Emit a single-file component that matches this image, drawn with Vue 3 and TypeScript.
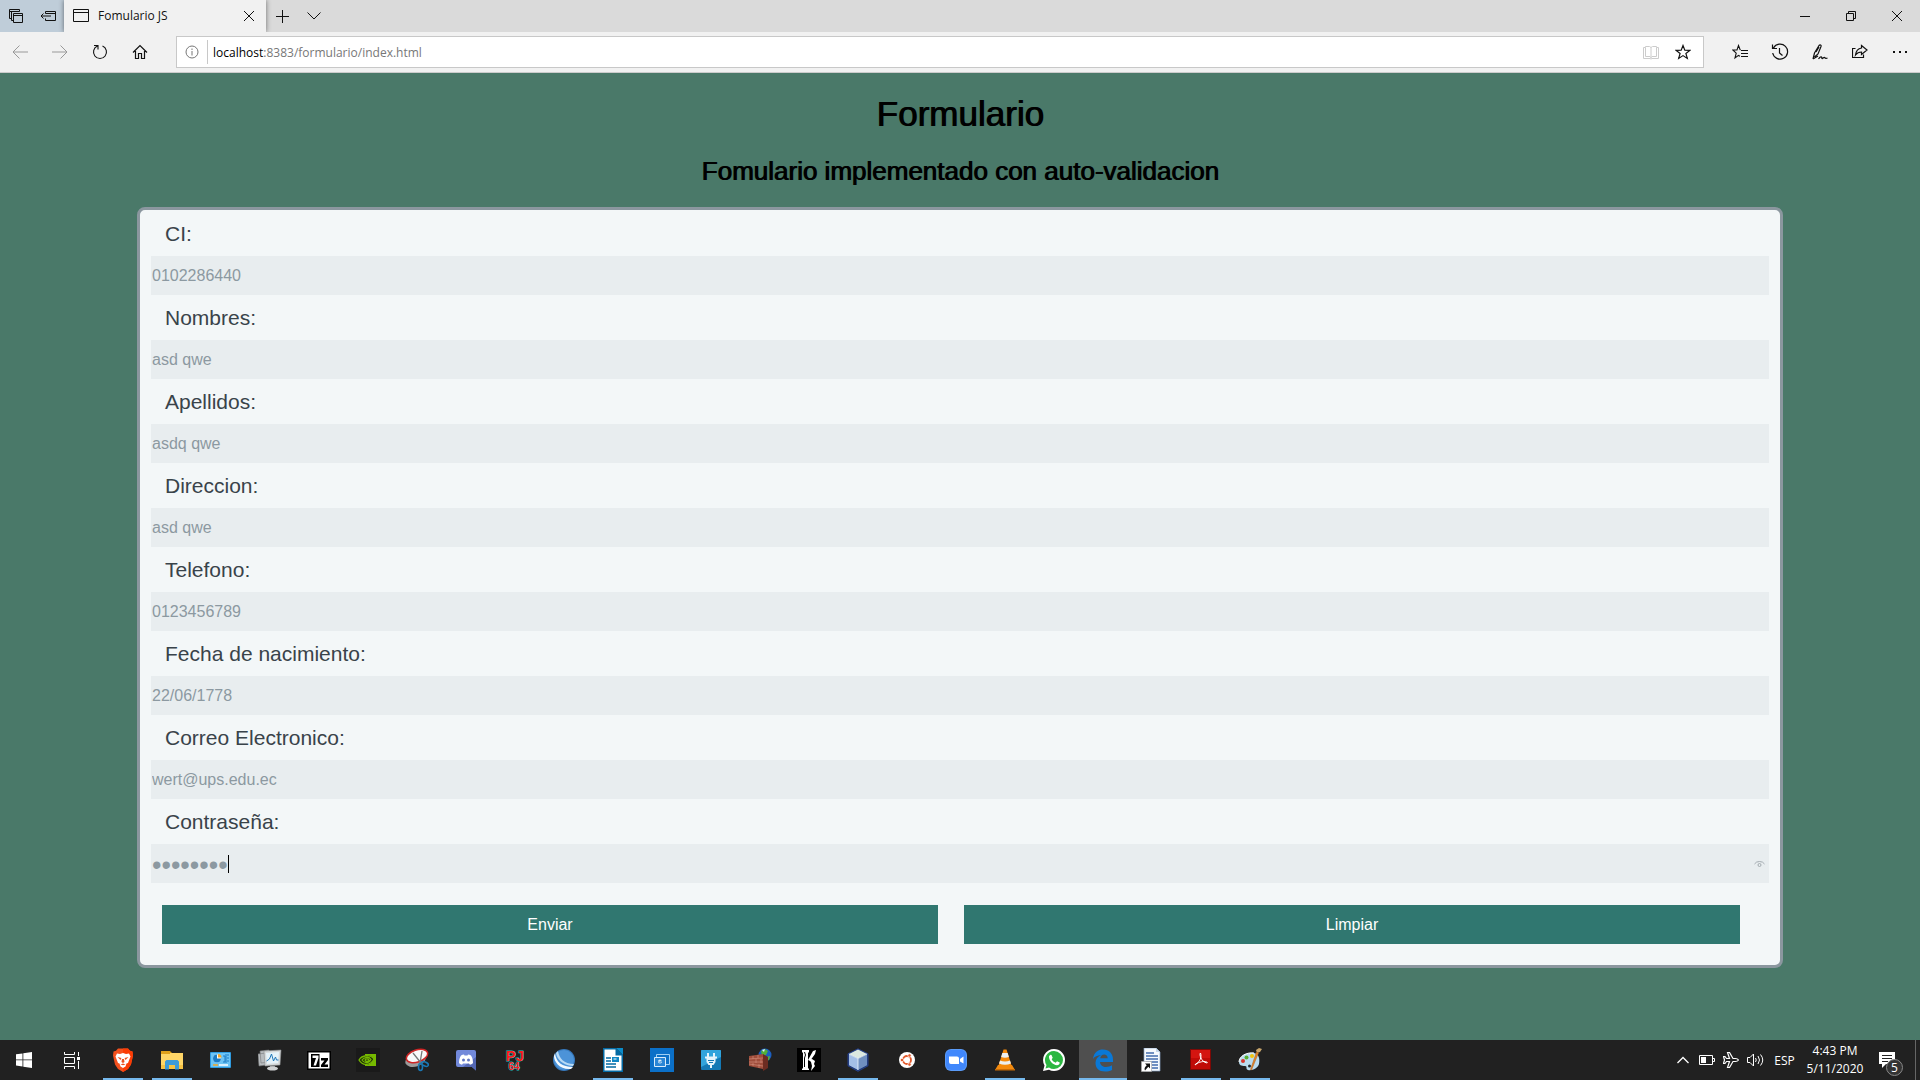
<script setup lang="ts">
import { ref } from 'vue'

interface Field {
  id: string
  label: string
  type: string
  value: string
}

interface TaskApp {
  name: string
  running?: boolean
  active?: boolean
  art: string
}

const initial: Field[] = [
  { id: 'ci', label: 'CI:', type: 'text', value: '0102286440' },
  { id: 'nombres', label: 'Nombres:', type: 'text', value: 'asd qwe' },
  { id: 'apellidos', label: 'Apellidos:', type: 'text', value: 'asdq qwe' },
  { id: 'direccion', label: 'Direccion:', type: 'text', value: 'asd qwe' },
  { id: 'telefono', label: 'Telefono:', type: 'text', value: '0123456789' },
  { id: 'fecha', label: 'Fecha de nacimiento:', type: 'text', value: '22/06/1778' },
  { id: 'correo', label: 'Correo Electronico:', type: 'text', value: 'wert@ups.edu.ec' },
  { id: 'contrasena', label: 'Contraseña:', type: 'password', value: 'asdfqwer' },
]

const fields = ref<Field[]>(initial)

function limpiar(): void {
  fields.value.forEach((f) => (f.value = ''))
}

const apps: TaskApp[] = [
  {
    name: 'Brave',
    running: true,
    art: '<path d="M7 .5h10l2 2.3 2.500 .7.5 4-2 9-3 4.500-5 3-5-3L4 16.500 2 7.500l.5-4L5 2.800z" fill="#f4511e"/><path d="M12 .5h5l2 2.300 2.500.7.5 4-2 9-3 4.500-5 3z" fill="#fb3c05"/><path d="M6 5.500l3 .4 3-.9 3 .9 3-.4 1.500 3-1 2.500-1.500 4-1.500.5-1 3-2.500 1.500-2.500-1.500-1-3L7 15l-1.500-4-1-2.500z" fill="#fff"/><path d="M6.500 9l4 1-1 2zM17.500 9l-4 1 1 2zM11 11h2l.5 3-1.500 1-1.500-1zM9.500 16.500l2.500-1 2.500 1-2.500.8z" fill="#e9501f"/>',
  },
  {
    name: 'Explorador de archivos',
    running: true,
    art: '<path d="M1 3h9l2 2h-11z" fill="#d99a12"/><path d="M1 5h22v16H1z" fill="#ffd667"/><path d="M1 3h9v3H1z" fill="#e0a11b"/><path d="M1 17h22v4H1z" fill="#f6c243"/><path d="M5 21.500v-8l1.500-1.500h11l1.500 1.500v8h-4V17H9v4.500z" fill="#3c9bd9"/>',
  },
  {
    name: 'Panel de control',
    art: '<rect x="1" y="4" width="21" height="16" rx="1" fill="#2f9be0"/><rect x="2" y="5" width="19" height="14" fill="#6cc4f5"/><circle cx="8" cy="10.500" r="4" fill="#fff"/><path d="M8 10.500V6.500a4 4 0 1 0 4 4z" fill="#1c7bc4"/><path d="M9 9.500V6a3.500 3.500 0 0 1 3.500 3.500z" fill="#f5a623"/><path d="M14 8h2v6h-2m4-7h2m-2 3h2m-2 3h2M17 6v9" stroke="#1c7bc4" fill="none"/><path d="M4 17h5" stroke="#f5a623" stroke-width="1.500"/><path d="M10 17h9" stroke="#fff" stroke-width="1.500"/>',
  },
  {
    name: 'Monitor de recursos',
    art: '<path d="M2 3l9-1v12l-8 1zM0 6l8-1v12l-7 1z" fill="#b8bcbf" stroke="#77797b" stroke-width=".6"/><path d="M6 3l17-1-1 15-15 1z" fill="#d7dadb" stroke="#8b8e90" stroke-width=".6"/><path d="M8 5l13-1-1 11-11 1z" fill="#e6f3fa"/><path d="M8.500 13l3-2 2-5 2 7 2-4 1 3h2" stroke="#2077b8" fill="none"/><path d="M12 18h5v2h-5z" fill="#9b9d9e"/><ellipse cx="14.500" cy="20.500" rx="5.500" ry="2" fill="#d0d2d3"/>',
  },
  {
    name: '7-Zip',
    art: '<path d="M0 3h24v19H0z" fill="#000"/><path d="M1.500 4.500h21v16h-21z" fill="#fff"/><path d="M4 6h8.500v13H4z" fill="#000"/><path d="M5.500 7.500h6V10l-2.500 7.500H6.500L9 10H5.500z" fill="#fff"/><path d="M14 10h7v2l-3.500 4.500H21V19h-7v-2l3.500-4.500H14z" fill="#000"/>',
  },
  {
    name: 'NVIDIA',
    art: '<path d="M0 0h24v24H0z" fill="#1a1a1a"/><path d="M9 6h11v12H9z" fill="#76b900"/><path d="M3 12c3-5 11-7 15-1-3 7-11 8-15 1z" fill="#1d2b08"/><path d="M3 12c3-5 11-6 15-1-3 6-11 8-15 1zM6 12c2-3 7-4 9-.5-2 4-7 4-9 .5zM9 12c1-1.500 3-1.500 4 0-1 2-3 2-4 0z" fill="none" stroke="#76b900" stroke-width="1.300"/>',
  },
  {
    name: 'Recortes',
    art: '<ellipse cx="10.500" cy="12" rx="10.500" ry="6.500" fill="#9b9b9b" transform="rotate(-18 10.500 12)"/><ellipse cx="12" cy="8" rx="11" ry="6" fill="#f9f9f9" stroke="#cf2525" stroke-width="1.500" transform="rotate(-18 12 8)"/><path d="M8 5l8 10M17 3l-2 12" stroke="#777" stroke-width="1.300"/><ellipse cx="15.500" cy="19" rx="2" ry="3.500" fill="none" stroke="#1978b5" stroke-width="1.600"/><ellipse cx="20" cy="16" rx="3.500" ry="2" transform="rotate(25 20 16)" fill="none" stroke="#1978b5" stroke-width="1.600"/>',
  },
  {
    name: 'Discord',
    art: '<path d="M4 2h16q2 0 2 2v18.500l-4-3.500H4q-2 0-2-2V4q0-2 2-2z" fill="#7289da"/><path d="M22 9v13.500l-4-3.500H9z" fill="#5468b4"/><path d="M6 16l-1-1c0-3 .5-5 2-7.500 1-.8 2-1 3-1l.5 1h3l.5-1c1 0 2 .2 3 1 1.500 2.500 2 4.500 2 7.500l-1 1-2 .8-1-1.300h-6L8 16.800z" fill="#fff"/><circle cx="9.500" cy="12" r="1.500" fill="#6377c4"/><circle cx="14.500" cy="12" r="1.500" fill="#6377c4"/>',
  },
  {
    name: 'Project64',
    art: '<text x="12" y="13" text-anchor="middle" font-size="15" class="pj">PJ</text><text x="11" y="22" text-anchor="middle" font-size="10" class="pj">64</text>',
  },
  {
    name: 'jDownloader',
    art: '<circle cx="12" cy="12" r="11" fill="#3779bd"/><circle cx="12" cy="12" r="10" fill="#4c93d8"/><path d="M3 5c1 9 7 14 18 14l-2 2C8 22 2 14 2 8z" fill="#f4faff"/><path d="M6 3c1 7 6 13 16 13l-1 2C10 17 5 11 4 5z" fill="#b8daf5"/>',
  },
  {
    name: 'LibreOffice Writer',
    running: true,
    art: '<path d="M2 0h13l7 7v17H2z" fill="#0369a3"/><path d="M3.500 1.500h11v6h6v15h-17z" fill="#fff"/><path d="M15 0h7v7z" fill="#0b8bc9"/><path d="M5 10h5m-5 3h5m-5 3h10M5 19h10" stroke="#0369a3" stroke-width="1.500"/><path d="M11 9h7v5h-7z" fill="#0f86c4"/><path d="M12.500 11h3" stroke="#fff"/>',
  },
  {
    name: 'Captura remota',
    art: '<path d="M0 0h24v24H0z" fill="#0b70c8"/><path d="M6.500 6.500h13v10h-13z" fill="none" stroke="#9fd0f5"/><path d="M4.500 9.500h11v9h-11z" fill="#2a86d6" stroke="#d9ecfb"/><circle cx="10" cy="13.500" r="2" fill="#d9ecfb"/><path d="M9 13.500l1 1 2-2" stroke="#0b70c8" fill="none"/>',
  },
  {
    name: 'Energía',
    art: '<rect x="2" y="2" width="20" height="20" rx="1" fill="#1479b5"/><path d="M2 3q0-1 1-1h18q1 0 1 1v6L2 19z" fill="#31a4dc"/><path d="M9 5v4m6-4v4M6 9.500h12M12 16v4" stroke="#e6f4fb" stroke-width="2"/><path d="M7.500 10h9v4l-2 3h-5l-2-3z" fill="#e6f4fb"/><path d="M9 12.500h6M10 14.500h4" stroke="#1479b5"/>',
  },
  {
    name: 'Firewall',
    art: '<circle cx="17" cy="7" r="6.500" fill="#1c5fc0"/><path d="M13 3l4-2 3 2-2 4-4 1zM18 9l4-1-1 4-3 1z" fill="#52b13b"/><path d="M14 2l3-1-1 3z" fill="#dff0ff"/><path d="M1 8l14-2v15L1 18z" fill="#9f4d3b"/><path d="M15 6l5 3v11l-5 3z" fill="#6c2c21"/><path d="M1 11l14-1m-14 4h14M1 16l14 2M5 8v3m5-4v3m-2 1v4m5-4v4M5 15v3m6-2v4" stroke="#d08b78" stroke-width=".7"/>',
  },
  {
    name: 'KH',
    art: '<path d="M0 0h24v24H0z" fill="#000"/><path d="M5 2h7v2l-1 1v15l1 1v1H5v-1l1-1V5L5 4z" fill="#fff"/><path d="M7.500 4l1 3-1 3v9" stroke="#000" fill="none"/><path d="M11 12l5-9 3-1-1 4-5 7zM12 12l3-1 3 2-1 3 1 2-4 5 1-5-1-4z" fill="#fff"/>',
  },
  {
    name: 'NetBeans',
    running: true,
    art: '<path d="M12 .8l10 5v12l-10 5.500-10-5.500v-12z" fill="#1c3572" stroke="#26418a"/><path d="M12 1.500l9 4.500-9 4.500-9-4.500z" fill="#dbe8e0"/><path d="M3 6l9 4.500v11.500l-9-4.800z" fill="#a4bfe6"/><path d="M21 6l-9 4.500v11.500l9-4.800z" fill="#6f8fc0"/><path d="M3 6l9 4.500 9-4.500M12 10.500V22" fill="none" stroke="#eef5fb" stroke-width=".8"/>',
  },
  {
    name: 'Ubuntu',
    art: '<circle cx="12" cy="12" r="8" fill="#fff"/><circle cx="12" cy="12" r="4" fill="none" stroke="#e2592b" stroke-width="1.800"/><g fill="#e2592b" stroke="#fff" stroke-width=".7"><circle cx="7" cy="12" r="1.700"/><circle cx="14.500" cy="7.500" r="1.700"/><circle cx="14.500" cy="16.500" r="1.700"/></g>',
  },
  {
    name: 'Zoom',
    art: '<rect x="1" y="1" width="22" height="22" rx="6" fill="#5a9bf8"/><rect x="2" y="2" width="20" height="20" rx="5" fill="#4087fc"/><path d="M5 8.500h8q2 0 2 2v5.500H7q-2 0-2-2zM16 11l3.500-2.500v7L16 13.500z" fill="#fff"/>',
  },
  {
    name: 'VLC',
    running: true,
    art: '<path d="M5 17h14l3 5H2z" fill="#f28a0f"/><path d="M10.500 1.500h3l5 16q-6.500 3-13 0z" fill="#f58a0b"/><path d="M9.300 5h5.400l1.200 4q-4 1.500-7.800 0zM7 12.500q5 2 10 0l1 3q-6 2.500-12 0z" fill="#eceff0"/><path d="M2 21h20v1.500H2z" fill="#c86b05"/>',
  },
  {
    name: 'WhatsApp',
    art: '<path d="M12 1a11 11 0 0 1 0 22q-3 0-5-1.200L1 23l1.500-5.500A11 11 0 0 1 12 1z" fill="#fff"/><path d="M12 3a9 9 0 0 1 0 18q-3 0-5-1.500L3.500 20.500l1-3.500A9 9 0 0 1 12 3z" fill="#2cb742"/><path d="M7 8l1.500-1.300 1 .3 1.200 2.700-1 1.500c1 1.800 2 2.700 4 3.500l1.300-1.500 2.700 1.300c.2 1.500-1.200 2.800-2.700 2.800C11 17 6.500 12.500 7 8z" fill="#fff"/>',
  },
  {
    name: 'Edge',
    running: true,
    active: true,
    art: '<path d="M2 11C3 4 7 1.500 12 1.500c6 0 10 4 10 10V14H9c.3 3.500 3 5 6 5 2 0 4.300-.6 6-1.700V22c-2 1-4.500 1.500-7 1.500C8 23.500 4.500 20 4.500 15c0-3.500 2-6.500 5.500-8-3.500.3-6.500 1.500-8 4zM9.200 10.200h7.500c0-2.300-1.500-3.700-3.500-3.700s-3.600 1.500-4 3.700z" fill="#0a78d6"/>',
  },
  {
    name: 'Documento',
    art: '<path d="M4 0h12l4 4v19H4z" fill="#f5f9fd" stroke="#8aa3c4" stroke-width=".7"/><path d="M16 0v4h4" fill="#c4d6ea"/><path d="M6 5h8m-8 3h12M6 11h12M6 14h12m-6 3h6m-6 3h6" stroke="#436cad" stroke-width="1.300"/><path d="M1.500 13.500h10v10h-10z" fill="#fff" stroke="#aaa" stroke-width=".7"/><path d="M5 15.500h5v5l-1.700-1.700L5 22.500q-1.500-2.500 1.700-5.300z" fill="#111"/>',
  },
  {
    name: 'Acrobat Reader',
    running: true,
    art: '<path d="M1 1h21v21H1z" fill="#7d0906"/><path d="M2 2h19v19H2z" fill="#c00b07"/><path d="M2 2h19v8H2z" fill="#d41510"/><path d="M6 17c5-3 7-8 5.500-12-1.500 1 .5 9 6.500 10 1-.2 0-1.500-3-1.500-3 0-9 2-9 3.500z" fill="none" stroke="#fff"/>',
  },
  {
    name: 'Paint',
    running: true,
    art: '<path d="M1 14c0-6 8-10 15-9 5 1 6 6 5 11-1 4-7 7-11 6-3-1 0-4-3-4-4 0-6-1-6-4z" fill="#b9dcef"/><path d="M1 14c0-6 8-10 15-9" fill="none" stroke="#fff"/><circle cx="5" cy="13" r="2" fill="#d9362b"/><circle cx="8.500" cy="9.500" r="2" fill="#59b031"/><circle cx="14" cy="8" r="2" fill="#f1c40f"/><circle cx="11.500" cy="18" r="1.500" fill="#23282c"/><path d="M22 4l2-3-3-1-3 2 1 3z" fill="#c9a66c"/><path d="M18.500 4l2 1-7 17-1-.5z" fill="#e0842a" stroke="#b0611a" stroke-width=".5"/>',
  },
]
</script>

<template>
  <div class="screen">
    <header class="browser">
      <div class="tabs">
        <div class="aside-tools">
          <button type="button" class="tool w32" aria-label="Pestañas reservadas">
            <svg width="14" height="14"><path d="M2.500 9.500h-2v-9h10v2M.5 2.500h10M4.500 4.500h9v9h-9zM4.500 6.500h9M4.500 11.500h-2v-9" /></svg>
          </button>
          <button type="button" class="tool w32" aria-label="Reservar pestañas">
            <svg width="16" height="12"><path d="M5.500 3.500v-2h10v9h-10v-2M5.500 3.500h10M11 6H1M3.500 3.500L1 6l2.500 2.500" /></svg>
          </button>
        </div>
        <div class="tab">
          <svg width="16" height="14"><path d="M.5.5h15v12H.5zM.5 3.500h15" /></svg>
          <span class="tab-title">Fomulario JS</span>
          <button type="button" class="tool w32" aria-label="Cerrar pestaña">
            <svg width="10" height="10"><path d="M0 0l10 10M10 0L0 10" /></svg>
          </button>
        </div>
        <button type="button" class="tool w32" aria-label="Nueva pestaña">
          <svg width="13" height="13"><path d="M0 6.500h13M6.500 0v13" /></svg>
        </button>
        <button type="button" class="tool w32" aria-label="Vista previa">
          <svg width="14" height="8"><path d="M.5.500L7 7 13.500.500" /></svg>
        </button>
        <div class="spacer"></div>
        <button type="button" class="tool w46" aria-label="Minimizar">
          <svg width="10" height="10"><path d="M0 5.500h10" /></svg>
        </button>
        <button type="button" class="tool w46" aria-label="Restaurar">
          <svg width="10" height="10"><path d="M.5 2.500h7v7h-7zM2.500 2.500v-2h7v7h-2" /></svg>
        </button>
        <button type="button" class="tool w46" aria-label="Cerrar">
          <svg width="10" height="10"><path d="M0 0l10 10M10 0L0 10" /></svg>
        </button>
      </div>

      <nav class="toolbar">
        <button type="button" class="tool w40 dim" aria-label="Atrás">
          <svg width="16" height="14"><path d="M16 7H1M7.500.500L1 7l6.500 6.500" /></svg>
        </button>
        <button type="button" class="tool w40 dim" aria-label="Adelante">
          <svg width="16" height="14"><path d="M0 7h15M8.500.500L15 7l-6.500 6.500" /></svg>
        </button>
        <button type="button" class="tool w40" aria-label="Actualizar">
          <svg width="16" height="16"><path d="M10.500 2a6.500 6.500 0 1 1-5 0M2 1.500h4v4" stroke-width="1.100" /></svg>
        </button>
        <button type="button" class="tool w40" aria-label="Inicio">
          <svg width="16" height="16"><path d="M1 8.500L8 1.500l7 7M3.500 7v7.500h3v-5h3v5h3V7" stroke-width="1.200" /></svg>
        </button>
        <div class="address">
          <button type="button" class="tool info" aria-label="Información del sitio">
            <svg width="14" height="14"><circle cx="7" cy="7" r="6" /><path d="M7 6v4.500M7 3.500V5" /></svg>
          </button>
          <a class="url" href="#"><b>localhost</b>:8383/formulario/index.html</a>
          <button type="button" class="tool w32 faint" aria-label="Vista de lectura">
            <svg width="16" height="15"><path d="M.5 2.500h2v-1h4l1.500 1 1.500-1h4v1h2v11H9l-1 .5-1-.5H.5zM2.500 2.500v9h4.500l1 1 1-1h4.500v-9M8 2.500V13" /></svg>
          </button>
          <button type="button" class="tool w32" aria-label="Favoritos">
            <svg width="16" height="16"><path d="M8 1.500l1.800 4.700 5 .2-3.900 3.100 1.400 4.900L8 11.600l-4.300 2.800 1.400-4.900L1.200 6.400l5-.2z" stroke-width="1.200" /></svg>
          </button>
        </div>
        <button type="button" class="tool w40" aria-label="Hub">
          <svg width="16" height="16"><path d="M8.500 6l-.5-.5L6.500 1.500 5 6H.8l3.400 3.200L3 14l3.500-2.600 1.500.8" stroke-width="1.100" /><path d="M9 6.500h7M9 9.500h7M9 12.500h7" stroke-width="1.200" /></svg>
        </button>
        <button type="button" class="tool w40" aria-label="Historial">
          <svg width="18" height="18"><path d="M2.500 5A7.500 7.500 0 1 1 1.700 10M1.500 1.500v4h4.500M8.500 5v5l3 2.500" stroke-width="1.200" /></svg>
        </button>
        <button type="button" class="tool w40" aria-label="Notas">
          <svg width="16" height="16"><path d="M1 15l1.500-6L7 1.500C8 .3 9.500 1 9 2.500L6 10l-3.500 3M4 8l3-5M1 15l5-3M6.500 15c1.500-2 2.500-2.500 3-2s0 2 1 1.500 1.500-1.500 2-1 1 1.500 3 .5" stroke-width="1.200" /></svg>
        </button>
        <button type="button" class="tool w40" aria-label="Compartir">
          <svg width="16" height="16"><path d="M3.500 4.500h-3v9h11v-3" stroke-width="1.200" /><path d="M9.500 1.500l5.500 4.500-5.500 4.500V8C6.500 8 5 9 3.500 11 4 7 6 4.500 9.500 4z" stroke-width="1.200" /></svg>
        </button>
        <button type="button" class="tool w40" aria-label="Más">
          <svg width="16" height="4"><path d="M1 2h2M7 2h2M13 2h2" stroke-width="2" /></svg>
        </button>
      </nav>
    </header>

    <main class="page">
      <h1>Formulario</h1>
      <h2>Fomulario implementado con auto-validacion</h2>
      <form class="form" @submit.prevent>
        <div v-for="f in fields" :key="f.id" class="field">
          <label :for="f.id">{{ f.label }}</label>
          <div class="control">
            <input :id="f.id" v-model="f.value" :type="f.type" autocomplete="off" />
            <template v-if="f.type === 'password'">
              <span class="caret"></span>
              <button type="button" class="reveal" aria-label="Mostrar contraseña">
                <svg width="11" height="8"><path d="M.5 4Q2 1.500 5.500 1.500T10.500 4" /><circle cx="5.500" cy="5" r="1.500" /></svg>
              </button>
            </template>
          </div>
        </div>
        <div class="actions">
          <button type="submit">Enviar</button>
          <button type="button" @click="limpiar">Limpiar</button>
        </div>
      </form>
    </main>

    <footer class="taskbar">
      <button type="button" class="system" aria-label="Inicio de Windows">
        <svg width="16" height="16"><path d="M0 2.300L6.500 1.400v6.100H0zM7.300 1.300L16 0v7.500H7.300zM0 8.300h6.500v6.200L0 13.600zM7.300 8.300H16V16l-8.700-1.300z" fill="#fff" /></svg>
      </button>
      <button type="button" class="system" aria-label="Vista de tareas">
        <svg width="16" height="17" class="line"><path d="M.5 0v2.500h10V0M.5 17v-2.500h10V17M.5 5.500h10v6H.5zM14.500 0v4M14.500 9v8" /><path d="M13 5h3v3h-3z" fill="#fff" stroke="none" /></svg>
      </button>
      <div class="apps">
        <button
          v-for="a in apps"
          :key="a.name"
          type="button"
          class="app"
          :class="{ running: a.running, active: a.active }"
          :aria-label="a.name"
        >
          <svg width="24" height="24" viewBox="0 0 24 24" v-html="a.art"></svg>
        </button>
      </div>
      <div class="spacer"></div>
      <div class="tray">
        <button type="button" class="tray-icon" aria-label="Iconos ocultos">
          <svg width="12" height="8" class="line"><path d="M.5 7L6 1.500 11.500 7" stroke-width="1.300" /></svg>
        </button>
        <button type="button" class="tray-icon" aria-label="Batería">
          <svg width="16" height="10" class="line"><path d="M.5.500h13v9H.5zM14 3.500h1.500v3H14" /><path d="M2 2h5v6H2z" fill="#fff" stroke="none" /></svg>
        </button>
        <button type="button" class="tray-icon" aria-label="Modo avión">
          <svg width="16" height="16" class="line"><path d="M15.500 8q-1-1.500-3-1.500H10L6.500.500h-2l2 6H3.500l-1.500-2H.5l1 3.500-1 3.500H2l1.500-2h3l-2 6h2L10 9.500h2.500q2 0 3-1.500z" stroke-width="1.200" /></svg>
        </button>
        <button type="button" class="tray-icon" aria-label="Volumen">
          <svg width="17" height="14" class="line"><path d="M.5 4.500h2.500L6.500 1v12L3 9.500H.5zM8.500 5q1.500 2 0 4M11 3q3 4 0 8M13.500 1.500q4.500 5.500 0 11" /></svg>
        </button>
        <span class="lang">ESP</span>
        <div class="clock"><span>4:43 PM</span><span>5/11/2020</span></div>
        <button type="button" class="notes" aria-label="Notificaciones">
          <svg width="16" height="16"><path d="M0 0h16v12H7l-4 4v-4H0z" fill="#fff" /><path d="M3 3.500h10M3 6.500h10M3 9.500h6" stroke="#222" /></svg>
          <span class="count">5</span>
        </button>
        <span class="peek"></span>
      </div>
    </footer>
  </div>
</template>

<style>
body {
  margin: 0;
}
.pj {
  font-family: "Liberation Sans", Arial, sans-serif;
  font-weight: 700;
  fill: #ff1a1a;
  stroke: #19c5c8;
  stroke-width: 1px;
  paint-order: stroke;
}
</style>

<style scoped>
.screen {
  display: flex;
  flex-direction: column;
  min-height: 100vh;
  font-family: "Open Sans", "Noto Sans", sans-serif;
  font-size: 12px;
  background: #4a7969;
}
button {
  margin: 0;
  padding: 0;
  border: 0;
  background: none;
  color: inherit;
  font: inherit;
}
svg {
  display: block;
}
.spacer {
  flex: 1;
}

/* Browser chrome */
.browser {
  border-bottom: 1px solid #ccc;
  background: #f1f1f1;
}
.browser svg,
.reveal svg {
  fill: none;
  stroke: currentColor;
}
.tabs {
  display: flex;
  height: 32px;
  background: #dadada;
}
.aside-tools {
  display: flex;
  background: #bfcdd9;
}
.tool {
  display: flex;
  flex: none;
  align-items: center;
  justify-content: center;
  color: #111;
}
.w32 {
  width: 32px;
}
.w40 {
  width: 40px;
}
.w46 {
  width: 46px;
}
.dim {
  color: #999;
}
.faint {
  color: #ccc;
}
.tab {
  display: flex;
  align-items: center;
  width: 202px;
  box-sizing: border-box;
  padding-right: 1px;
  padding-left: 9px;
  background: #f1f1f1;
  color: #111;
  box-shadow: 0 0 5px rgba(0, 0, 0, 0.5);
  clip-path: inset(0 -6px 0 -6px);
}
.tab-title {
  flex: 1;
  padding-left: 9px;
  line-height: 16px;
}
.toolbar {
  display: flex;
  height: 40px;
}
.address {
  display: flex;
  flex: 1;
  align-items: stretch;
  box-sizing: border-box;
  margin: 4px 16px 4px 16px;
  padding-right: 4px;
  border: 1px solid #c8c8c8;
  background: #fff;
}
.info {
  width: 31px;
  margin: 3px 0;
  border-right: 1px solid #c8c8c8;
  color: #777;
}
.url {
  flex: 1;
  padding-left: 5px;
  color: #777;
  line-height: 32px;
  text-decoration: none;
}
.url b {
  color: #000;
  font-weight: 400;
}

/* Page */
.page {
  flex: 1;
  padding: 21px 137px 0;
  font-family: "Liberation Sans", Arial, sans-serif;
}
h1,
h2 {
  margin: 0;
  color: #000;
  font-weight: 400;
  text-align: center;
  text-shadow: 1px 0 0 #000;
}
h1 {
  margin-bottom: 22px;
  font-size: 35px;
  line-height: 40px;
}
h2 {
  margin-bottom: 21px;
  font-size: 26px;
  line-height: 30px;
}
.form {
  padding: 1px 11px 21px;
  border: 3px solid #8b979f;
  border-radius: 8px;
  background: #f3f7f8;
}
.field label {
  display: block;
  padding: 10px 14px;
  color: #39434a;
  font-size: 21px;
  line-height: 25px;
}
.control {
  position: relative;
}
.control input {
  display: block;
  box-sizing: border-box;
  width: 100%;
  height: 39px;
  margin: 0;
  padding: 0 1px;
  border: 0;
  border-radius: 0;
  outline: 0;
  background: #e8edef;
  color: #8c99a1;
  font-family: "Liberation Sans", Arial, sans-serif;
  font-size: 16px;
}
.control input[type="password"] {
  padding-top: 4px;
  font-size: 27px;
}
.caret {
  position: absolute;
  top: 11px;
  left: 77px;
  width: 1px;
  height: 18px;
  background: #000;
}
.reveal {
  position: absolute;
  top: 16px;
  right: 4px;
  color: #a3abb0;
}
.actions {
  display: flex;
  gap: 26px;
  margin: 22px 29px 0 11px;
}
.actions button {
  flex: 1;
  height: 39px;
  background: #307770;
  color: #fff;
  font-size: 16px;
}

/* Taskbar */
.taskbar {
  display: flex;
  height: 40px;
  background: #212121;
  color: #fff;
}
.line {
  fill: none;
  stroke: #fff;
}
.system {
  display: flex;
  align-items: center;
  justify-content: center;
  width: 48px;
}
.apps {
  display: flex;
  gap: 1px;
  margin-left: 3px;
}
.app {
  display: flex;
  position: relative;
  align-items: center;
  justify-content: center;
  width: 48px;
}
.app.running::after {
  content: "";
  position: absolute;
  right: 4px;
  bottom: 0;
  left: 4px;
  height: 2px;
  background: #76b9ed;
}
.app.active {
  background: #4f4f4f;
}
.app.active::after {
  right: 0;
  left: 0;
}
.tray {
  display: flex;
  align-items: center;
}
.tray-icon {
  display: flex;
  align-items: center;
  justify-content: center;
  width: 24px;
  height: 40px;
}
.lang {
  width: 35px;
  text-align: center;
}
.clock {
  display: flex;
  flex-direction: column;
  width: 66px;
  line-height: 18px;
  text-align: center;
}
.notes {
  display: flex;
  position: relative;
  align-items: center;
  width: 47px;
  height: 40px;
  padding-left: 11px;
}
.count {
  position: absolute;
  top: 19px;
  left: 18px;
  width: 15px;
  height: 15px;
  border: 1px solid #888;
  border-radius: 50%;
  background: #333;
  font-size: 12px;
  line-height: 15px;
  text-align: center;
}
.peek {
  width: 4px;
  height: 40px;
  border-left: 1px solid #666;
}
</style>
